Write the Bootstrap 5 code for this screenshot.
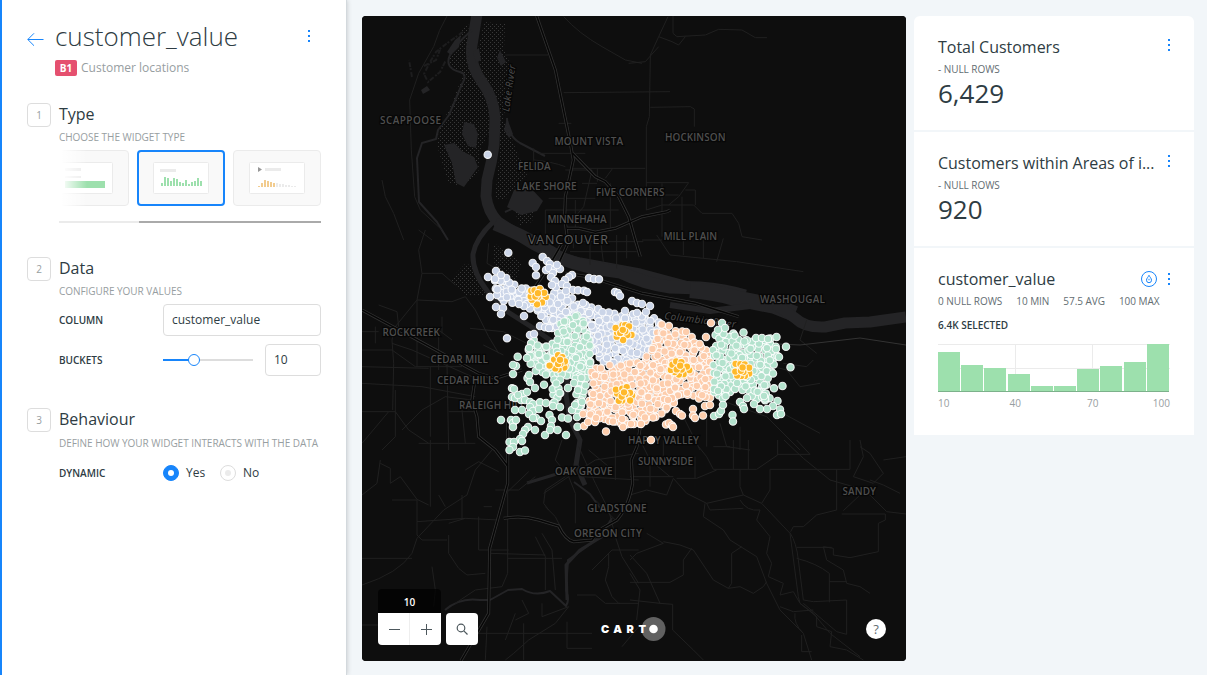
<!DOCTYPE html>
<html lang="en">
<head>
<meta charset="utf-8">
<meta name="viewport" content="width=device-width, initial-scale=1">
<title>customer_value</title>
<link href="https://cdn.jsdelivr.net/npm/bootstrap@5.3.0/dist/css/bootstrap.min.css" rel="stylesheet">
<style>
body{font-family:"Open Sans",sans-serif;font-size:12px;line-height:16px;color:#2e3c43;background:#f2f6f9;height:675px;overflow:hidden}
.editor{width:347px;flex:none;background:#fff;border-left:2px solid #1785fb;border-right:1px solid #d3d9dd;box-shadow:0 0 5px rgba(0,0,0,.2);padding:22px 25px 0 25px;z-index:1}
.back{width:28px;flex:none;padding-top:10px}
.title-lg{font-size:26px;line-height:30px;font-weight:300;margin:-1px 0 9px}
.tag-b1{background:#e5506f;color:#fff;font-size:10px;font-weight:700;width:22px;height:16px;border-radius:2px;text-align:center;line-height:16px}
.muted{color:#979ea1}
.step{width:24px;height:24px;flex:none;border:1px solid #ddd;border-radius:4px;font-size:10px;line-height:22px;text-align:center;color:#979ea1}
.head{font-size:16px;line-height:22px;font-weight:400;margin:0 0 4px}
.hint{font-size:10px;line-height:16px;color:#979ea1;white-space:nowrap;letter-spacing:-.04px}
.lab{font-size:10px;font-weight:600;width:104px;flex:none}
.field{border:1px solid #ddd;border-radius:4px;height:32px;line-height:30px;padding:0 8px;font-size:12px;background:#fff}
.body262{width:262px;flex:none}
.types{height:56px;overflow:hidden}
.types::before{content:"";position:absolute;z-index:2;left:0;top:0;width:28px;height:56px;background:linear-gradient(90deg,#fff 8%,rgba(255,255,255,0))}
.tile{width:88px;height:56px;flex:none;background:#f9f9f9;border:1px solid #ebebeb;border-radius:4px}
.tile.on{border:2px solid #1785fb}
.scroll{height:2px;background:#ebebeb}
.scroll div{width:182px;height:2px;background:#aaa}
.radio{width:16px;height:16px;border-radius:50%;border:1px solid #ddd;background:#fff;display:flex;align-items:center;justify-content:center}
.radio::after{content:"";width:6px;height:6px;border-radius:50%;background:#ebebeb}
.radio.on{background:#1785fb;border-color:#1785fb}
.radio.on::after{background:#fff}
.map-wrap{width:544px;height:645px;margin:16px 8px 0 15px;flex:none;border-radius:4px;overflow:hidden;background:#0e0e0e}
.zoomer{left:16px;bottom:16px}
.lvl{height:24px;width:63px;background:rgba(0,0,0,.7);color:#fff;font-size:10px;font-weight:600;line-height:27px;text-align:center;border-radius:4px 4px 0 0}
.zbtn{height:32px;background:#fff;border-radius:0 0 4px 4px}
.sbtn{width:32px;height:32px;background:#fff;border-radius:4px}
.help{width:20px;height:20px;right:20px;bottom:22px;border-radius:50%;background:#fff;color:#636d72;font-size:13px;line-height:20px;text-align:center}
.logo{left:238px;bottom:20px}
.widgets{width:280px;margin-top:16px;flex:none}
.widget{background:#fff;padding:20px 24px 0;margin-bottom:2px;height:114px}
.wt{font-size:16px;line-height:22px;font-weight:400;margin:0;width:218px;white-space:nowrap;letter-spacing:-.02px}
.stats{font-size:10px;line-height:14px;color:#636d72;letter-spacing:-.05px}
.num{font-size:26px;line-height:32px;margin-top:1px}
.ticks{font-size:10px;line-height:14px;color:#979ea1;width:232px}
.ticks span{width:24px;text-align:center}
.t{fill:#4f4f4f;stroke:#070707;stroke-width:2.6px;paint-order:stroke;font-family:"Open Sans",sans-serif;font-size:10px;font-weight:600}
.road path{fill:none;stroke:#202020;stroke-width:3}
.hwA path{fill:none;stroke:#323232;stroke-width:9}
.hwB path{fill:none;stroke:#060606;stroke-width:4.5}
</style>
</head>
<body class="d-flex">
<aside class="editor">
  <header class="d-flex">
    <div class="back"><svg class="d-block" width="17" height="15" viewBox="0 0 17 15" fill="none" stroke="#1785fb"><path d="M16.500 7.500H.8M7 1.300L.8 7.500 7 13.700"/></svg></div>
    <div class="flex-grow-1">
      <h1 class="title-lg">customer_value</h1>
      <div class="d-flex"><span class="tag-b1">B1</span><span class="muted ms-1">Customer locations</span></div>
    </div>
    <svg width="2" height="13" fill="#1785fb" style="margin:8px 11px 0 0"><path d="M0 0h2v2H0zM0 5h2v2H0zM0 10h2v2H0z"/></svg>
  </header>

  <section class="d-flex gap-2" style="margin-top:27px;height:154px">
    <div class="step">1</div>
    <div class="body262">
      <h2 class="head">Type</h2>
      <div class="hint">CHOOSE THE WIDGET TYPE</div>
      <div class="types d-flex justify-content-end gap-2 position-relative" style="margin-top:5px">
        <div class="tile d-flex align-items-center justify-content-center"><svg width="56" height="32"><rect x=".5" y=".5" width="55" height="31" rx="1" fill="#fff" stroke="#ebebeb"/><path fill="#ebebeb" d="M8 6h16v3H8zM8 14h16v2H8z"/><path fill="#9de0ad" d="M8 19h40v7H8z"/></svg></div>
        <div class="tile on d-flex align-items-center justify-content-center"><svg width="56" height="32"><rect x=".5" y=".5" width="55" height="31" rx="1" fill="#fff" stroke="#ebebeb"/><path fill="#ebebeb" d="M7 7h16v3H7z"/><path fill="#9de0ad" d="M8 24v-3h2v3zM11 24v-9h2v9zM14 24v-8h2v8zM17 24v-5h2v5zM20 24v-8h2v8zM23 24v-7h2v7zM26 24v-4h2v4zM29 24v-3h2v3zM32 24v-6h2v6zM35 24v-2h2v2zM38 24v-4h2v4zM41 24v-5h2v5zM44 24v-8h2v8zM47 24v-5h2v5z"/></svg></div>
        <div class="tile d-flex align-items-center justify-content-center"><svg width="56" height="32"><rect x=".5" y=".5" width="55" height="31" rx="1" fill="#fff" stroke="#ebebeb"/><path fill="#979797" d="M9 5l4 2.500L9 10z"/><path fill="#ebebeb" d="M16 6h16v3H16zM27 25v-4h2v4zM30 25v-3h2v3zM33 25v-3h2v3zM36 25v-2h2v2zM39 25v-2h2v2zM42 25v-1h2v1zM45 25v-1h2v1z"/><path fill="#f2cc8f" d="M9 25v-1h2v1zM12 25v-4h2v4zM15 25v-7h2v7zM18 25v-6h2v6zM21 25v-5h2v5zM24 25v-4h2v4z"/></svg></div>
      </div>
      <div class="scroll d-flex justify-content-end" style="margin-top:15px"><div></div></div>
    </div>
  </section>

  <section class="d-flex gap-2" style="height:151px">
    <div class="step">2</div>
    <div class="body262">
      <h2 class="head">Data</h2>
      <div class="hint">CONFIGURE YOUR VALUES</div>
      <div class="d-flex align-items-center" style="margin-top:5px"><span class="lab">COLUMN</span><div class="field flex-grow-1">customer_value</div></div>
      <div class="d-flex align-items-center mt-2"><span class="lab">BUCKETS</span>
        <svg width="90" height="14"><path d="M0 6h90v2H0z" fill="#ddd"/><path d="M0 6h28v2H0z" fill="#1785fb"/><circle cx="31" cy="7" r="5.500" fill="#fff" stroke="#1785fb"/></svg>
        <div class="field ms-auto" style="width:56px">10</div></div>
    </div>
  </section>

  <section class="d-flex gap-2">
    <div class="step">3</div>
    <div class="body262">
      <h2 class="head">Behaviour</h2>
      <div class="hint" style="margin-top:5px">DEFINE HOW YOUR WIDGET INTERACTS WITH THE DATA</div>
      <div class="d-flex align-items-center" style="margin-top:14px"><span class="lab">DYNAMIC</span><span class="radio on"></span><span style="width:34px;margin-left:7px">Yes</span><span class="radio"></span><span style="margin-left:7px">No</span></div>
    </div>
  </section>
</aside>

<main class="map-wrap position-relative">
<svg class="d-block" id="map" width="544" height="645" viewBox="362 16 544 645">
  <defs>
    <pattern id="marsh" width="4" height="4" patternUnits="userSpaceOnUse"><rect width="1" height="1" fill="#383838"/><rect x="2" y="2" width="1" height="1" fill="#383838"/></pattern>
  </defs>
  <rect x="362" y="16" width="544" height="645" fill="#0e0e0e"/>
  <!-- wetlands -->
  <g fill="url(#marsh)">
    <path d="M468 22L450 48 448 66 464 72 452 103 440 128 437 145 448 182 460 186 478 175 480 150 490 130 492 105 478 76 470 60z"/>
    <path d="M484 22L505 24 504 50 512 68 508 95 503 120 512 140 527 175 518 185 505 200 495 198 499 160 500 110 482 80 478 50z"/>
    <path d="M514 210L534 208 532 222 520 225zM450 280L466 263 477 270 480 288 489 296 465 296zM493 242L505 252 522 262 515 285 495 270z"/>
  </g>
  <!-- water -->
  <g fill="none" stroke="#242426" stroke-linejoin="round">
    <path stroke-width="11" d="M477 14L472 45Q469 64 482 82Q494 98 495 118L494 145Q492 162 487 180L486 196Q488 212 498 222L520 236Q550 256 580 263L640 274 700 290"/>
    <path stroke-width="5" d="M493 222Q476 238 473 254Q472 272 488 292L508 312 530 326 550 340 568 372 566 395 570 420 580 440 576 465 585 485"/>
    <path stroke-width="13" d="M495 224Q530 238 560 258Q585 268 620 272Q645 284 670 287L700 288Q725 290 745 296"/>
    <path stroke-width="16" d="M690 290Q715 292 735 298L775 306 795 314"/><path stroke-width="6" d="M670 305L710 311 750 306"/>
    <path stroke-width="11" d="M775 304L795 318Q805 328 825 327L845 323 870 322 906 317"/>
    <path stroke-width="2" d="M472 30Q455 45 450 55Q444 68 460 72Q468 74 462 84L449 115 438 130 436 139 422 143 417 158 419 202 437 222 448 240"/>
    <path stroke-width="2" d="M507 118Q507 135 520 143L545 156M505 212L516 207"/>
    <path stroke-width="2" d="M445 610Q460 597 480 600L490 600 508 590 522 589Q535 597 550 591L566 606Q570 600 566 590L568 560 585 548 600 537 612 518M574 482L590 494 600 508"/>
    <path stroke-width="3" d="M567 600L566 565 580 550 603 536M527 483L560 473"/>
  </g>
  <g fill="#242426"><path d="M464 122l10 2 4 10-2 14-8-2-6-12zM444 145l10-2 8 8 12 6 4 10-14 20-8-4-4-20zM514 190l14-5 15 16-6 10-16 4-14-8zM421 90l6-4 3 4-7 4zM473 52l6-4 2 12-5 3zM500 50l6 12-5 4-4-8zM455 40l6-5-2 12-8 8-4-3z"/><path d="M507 118l6 16-4 4-5-8z"/></g>
  <path fill="none" stroke="#1d1d1e" stroke-width="2" stroke-dasharray="5 2 2 1" d="M463 32L446 44 436 52 430 62 424 74 428 82 440 72 446 60M412 77L409 60M424 66L436 60 440 50"/>
  <!-- minor roads, drawn on a grid three times finer than the map -->
  <g class="road">
    <g transform="translate(362 10) scale(.33333)">
      <path d="M255 18Q230 60 215 110L170 190 143 270 148 420 158 560 175 600 240 660M430 135H558M605 248L924 245M590 340H628M632 475H850M660 520H705M515 415V480M530 430H640L670 430M515 450Q570 455 610 470M610 480H690M706 475V515M752 475L730 505M690 480L665 590 640 620M745 520V660M560 565H700M550 600H770M640 570V660M550 600V690M60 510L70 560 95 610 125 690M170 660L210 690M605 20Q650 70 720 110L790 150 840 160"/>
      <path d="M918 20L890 80 865 135 862 320 853 350V600M933 18V70L945 80 1030 75 1070 58 1140 60 1180 83H1215M865 292L985 290 997 297V350M853 518H980L950 560 920 585M853 600L900 585 995 585 1020 610H1110L1130 640 1140 680 1200 690M960 560V660M900 520V680M840 690H900M853 555H950M970 540H1000V585"/>
      <path d="M890 80L930 95 950 105 970 80M800 160L850 155 890 110"/>
    </g>
    <g transform="translate(362 230) scale(.33333)">
      <path d="M190 0L170 60 180 130 165 210 100 290 90 330M165 210L270 215 310 200 340 240 380 320 410 370M50 225L105 245 110 290M40 290V340M0 305H50M0 360H90L160 410H300M90 340L150 360 240 400 330 440M0 410L200 415M0 460L180 470 340 500M0 545L100 545 140 600 200 640M90 330L95 400 92 540M165 210V410M255 400L260 660M205 410V620M0 640L80 545M120 600L180 540 250 500 330 510M260 545H340M300 540L310 640M180 130L240 130 280 165M240 260V310M230 420V300L270 330M380 40L375 100 410 120M100 480V620L60 660M170 640H340"/>
    </g>
    <g transform="translate(362 440) scale(.33333)">
      <path d="M0 435Q110 400 150 340L165 295 245 210 315 165 340 90 390 30M0 355H150M55 60L45 130 0 165M55 70L85 85V130L115 110 165 178 200 195M90 180H165V285L180 300H255M165 245L310 235 410 240M205 0V200M310 90L350 65 410 95M300 165V235M260 285V340L290 385 315 405 370 400M260 250L310 235M350 230V330H440M437 150V400L420 440 340 450 280 490M385 340L550 345M437 355H600M520 290L550 350V450M540 280L570 330 580 450M550 200L580 230 600 270M400 150L470 150 520 110M437 155L500 95M600 0L580 60 620 110 640 160 640 250M650 20L700 130 740 210 760 290 780 350 830 430M545 160L620 110 700 60M560 210L545 190 550 150 610 110M690 390L750 330 830 330M740 340V380L730 420 750 470 770 490H830M645 465H700L730 490H775M540 530L620 500 580 550 500 600 455 640 430 660M540 490V530M615 545V625H690M350 580H690M485 550V660M0 555H50M375 560L370 660M210 380L220 450 215 500M780 620L830 560M390 200L365 200M230 165L250 200M700 60L830 40M660 110L830 120M680 30L740 80M760 0V120M700 180L760 240"/>
      <path d="M460 520L430 600M480 480L500 520 460 540"/>
    </g>
    <g transform="translate(630 440) scale(.33333)">
      <path d="M462 0L520 55 600 120 670 140 720 165 770 215 828 222M443 0V45L380 88H250L230 50 190 0M443 43H540L500 0M420 88H660V0M620 88V210L560 225 520 260 490 260 482 275M640 212L690 165M635 222H766V240L745 250V335L660 353 610 345V325L580 320 590 360 640 390 650 430 690 440 720 460M480 278Q500 310 505 360L520 480 550 485 650 480V583L620 575 520 490M605 322H500M500 355Q560 370 598 400V487M598 425H650M420 88V150L395 190M330 88V140L340 165M0 165L50 150 110 165 130 115 170 160 230 190 340 165 395 190 480 280 505 470 510 490 550 520 600 580 690 650M225 190L220 230 280 270 300 300 380 350 410 430 450 510 520 580 545 660M230 190L240 210 340 205M140 115H200L260 90M310 0V88M355 0V88M195 50V115M250 20H300M0 360L20 340 100 310 50 280M100 305L150 315 190 330 250 420 295 445 330 440 370 460 400 440 410 425M335 320L305 340V430L295 445M185 325L160 360V405L120 427H0M0 345L50 400 90 490 128 493V570L190 630 220 660M0 480L90 490M0 400L30 450 20 540M690 0L700 50 670 110 730 130 760 100 720 40 690 20M720 120L760 135 810 160M760 60L828 50M450 500L490 515 550 510M515 585V635H545M495 520Q490 550 520 580M100 0V60M30 0L60 60 120 110M0 110H130M60 60V140"/>
      <path stroke-width="4.500" d="M330 180Q350 215 390 210L380 240 420 290 410 340 425 370 415 410 460 430 450 465 490 455 510 490 560 530 560 560 605 575 600 620 650 630 700 660"/>
    </g>
    <g transform="translate(640 300) scale(.33333)">
      <path d="M240 300L380 350 480 450M360 340L330 300M410 330L540 400M430 190L500 200 520 180M200 350V440M240 370L260 440 330 450M130 350L180 450M300 380V450M500 60L480 120 530 160M400 200L440 210 480 260 540 250"/>
    </g>
    <g transform="translate(470 235) scale(.33333)"><path d="M310 0V40M360 10V90M390 0L400 80M440 0V100M470 0V70M300 50H500M340 20H520M560 0L600 60 800 80 1000 110M640 0V60M700 0V70M760 10L740 80M0 280L100 290 180 330M40 330L100 360"/></g>
  </g>
  <!-- highways: pale casing with a dark core -->
  <g id="hw" class="hwA">
    <g transform="translate(362 10) scale(.33333)"><path d="M524 18L580 180 625 400 634 450 610 560 608 620 618 700 590 760M632 430L700 500 730 515 770 560 800 620 820 690 835 740M615 655L650 655 700 667 760 655 840 620 915 605 925 600"/></g>
    <g transform="translate(362 230) scale(.33333)"><path d="M0 240L130 310 350 430 400 445 480 420M340 440L330 510 345 560 350 620 400 660 437 708"/><path d="M610 130L680 140 840 190 1000 220 1130 260M600 40L560 110 500 200"/></g>
    <g transform="translate(362 440) scale(.33333)"><path d="M437 -60L437 130 383 325 380 520 297 662M425 235Q480 225 530 240L590 258Q610 300 635 305L690 300 720 265 765 240Q800 200 812 130L808 60 825 20 835 -40"/></g>
  </g>
  <g id="hwCore" class="hwB"></g>
  <path d="M720 330Q760 345 800 345L860 338 906 345" fill="none" stroke="#333"/>
  <g id="labels"></g>
  <text class="t" font-style="italic" transform="translate(509 112) rotate(-82)" textLength="47" style="font-weight:400">Lake River</text>
  <text class="t" font-style="italic" transform="translate(664 319) rotate(7)" textLength="72" style="font-weight:400">Columbia River</text>
  <g id="dots" stroke="#fff" stroke-width="1.100" stroke-opacity=".88"></g>
</svg>
  <div class="position-absolute zoomer d-flex align-items-end">
    <div><div class="lvl">10</div>
      <div class="zbtn"><svg class="d-block" width="63" height="32" stroke="#4d585d" stroke-width="1"><path d="M11 16.500h11M43 16.500h11M48.500 11v11"/><path d="M31.500 0v32" stroke="#eee"/></svg></div></div>
    <div class="sbtn" style="margin-left:5px"><svg class="d-block" width="32" height="32" fill="none" stroke="#4d585d" stroke-width="1.200"><circle cx="15" cy="15" r="3.800"/><path d="M17.800 17.800l3.700 3.700"/></svg></div>
  </div>
  <svg class="position-absolute logo" width="70" height="24"><circle cx="53.500" cy="12" r="12" fill="#616161"/><circle cx="53.500" cy="12" r="4.300" fill="#fff"/><text x="1" y="16" fill="#fff" font-family="Inter,sans-serif" font-weight="900" font-size="11" textLength="45">CART</text></svg>
  <div class="position-absolute help">?</div>
</main>

<aside class="widgets">
  <div class="widget rounded-top">
    <div class="d-flex justify-content-between"><h3 class="wt">Total Customers</h3><svg width="2" height="13" fill="#1785fb" style="margin-top:3px"><path d="M0 0h2v2H0zM0 5h2v2H0zM0 10h2v2H0z"/></svg></div>
    <div class="stats" style="margin-top:4px">- NULL ROWS</div>
    <div class="num">6,429</div>
  </div>
  <div class="widget">
    <div class="d-flex justify-content-between"><h3 class="wt">Customers within Areas of i...</h3><svg width="2" height="13" fill="#1785fb" style="margin-top:3px"><path d="M0 0h2v2H0zM0 5h2v2H0zM0 10h2v2H0z"/></svg></div>
    <div class="stats" style="margin-top:4px">- NULL ROWS</div>
    <div class="num">920</div>
  </div>
  <div class="widget" style="height:187px">
    <div class="d-flex align-items-center"><h3 class="wt" style="width:203px">customer_value</h3>
      <svg width="16" height="16" fill="none" stroke="#1785fb"><circle cx="8" cy="8" r="7.500"/><path d="M8 4.300C7.300 6 5.500 7.300 5.500 9.200a2.500 2.500 0 0 0 5 0C10.500 7.300 8.700 6 8 4.300zM8 7.800v1.500"/></svg>
      <svg class="ms-auto" width="2" height="12" fill="#1785fb"><path d="M0 0h2v2H0zM0 5h2v2H0zM0 10h2v2H0z"/></svg></div>
    <div class="stats d-flex" style="margin-top:4px;gap:14px"><span>0 NULL ROWS</span><span>10 MIN</span><span>57.5 AVG</span><span>100 MAX</span></div>
    <div class="fw-semibold" style="font-size:10px;margin-top:9px">6.4K SELECTED</div>
    <svg class="d-block" id="hist" width="232" height="48" style="margin-top:11px"><path d="M0 .5h232M0 24.500h232M77.500 0v48M154.500 0v48" stroke="#ebebeb"/></svg>
    <div class="ticks d-flex justify-content-between" style="margin-top:4px"><span class="text-start">10</span><span style="margin-left:-12px">40</span><span style="margin-right:-12px">70</span><span class="text-end">100</span></div>
  </div>
</aside>
<script src="https://cdn.jsdelivr.net/npm/bootstrap@5.3.0/dist/js/bootstrap.bundle.min.js"></script>
<script>
document.getElementById('hwCore').innerHTML = document.getElementById('hw').innerHTML;
// place names: text, left, right, vertical centre
const places = [['SCAPPOOSE',380,441,120],['MOUNT VISTA',554.5,623,141],['HOCKINSON',665,725.500,137],['FELIDA',518,550.500,166.500],['LAKE SHORE',516.500,576.500,186],['FIVE CORNERS',596,664.500,192.500],['MINNEHAHA',547.500,606.500,219],['MILL PLAIN',663.500,717,236],['WASHOUGAL',760,825,299],['ROCKCREEK',382.500,440,332.500],['CEDAR MILL',430.500,488,359],['CEDAR HILLS',437,499,380],['RALEIGH HILLS',459,531,405],['HAPPY VALLEY',628,699,440],['SUNNYSIDE',638,693,461],['OAK GROVE',555,612.500,471],['GLADSTONE',587,646.500,508.500],['OREGON CITY',574,642,533],['SANDY',842.500,876,491.500]];
document.getElementById('labels').innerHTML =
  places.map(([s,a,b,y]) => `<text class="t" x="${a}" y="${y+3.500}" textLength="${b-a}">${s}</text>`).join('') +
  '<text class="t" x="528" y="243.700" textLength="80" style="font-size:12.500px;font-weight:400;fill:#606060">VANCOUVER</text>';

let seed = 7;
const rnd = () => (seed = (seed * 16807) % 2147483647) / 2147483647;
const inside = (p, x, y) => { let c = false; for (let i = 0, j = p.length - 2; i < p.length; j = i, i += 2) if ((p[i+1] > y) !== (p[j+1] > y) && x < (p[j]-p[i]) * (y-p[i+1]) / (p[j+1]-p[i+1]) + p[i]) c = !c; return c; };
const out = [];
const dot = (x, y, f) => out.push(`<circle cx="${x.toFixed(1)}" cy="${y.toFixed(1)}" r="3.700" fill="${f}"/>`);
// fills a polygon with scattered dots: a tight lower layer, then a looser one whose dots stay whole
function area(poly, f, gap) {
  const xs = poly.filter((_, i) => i % 2 === 0), ys = poly.filter((_, i) => i % 2);
  const x0 = Math.min(...xs), x1 = Math.max(...xs), y0 = Math.min(...ys), y1 = Math.max(...ys);
  for (const [g0, n] of [[gap, 3000], [gap * 1.9, 1200]]) {
    const got = [];
    for (let k = 0; k < n; k++) {
      const x = x0 + rnd() * (x1 - x0), y = y0 + rnd() * (y1 - y0);
      if (inside(poly, x, y) && got.every(g => Math.hypot(g[0]-x, g[1]-y) > g0)) { got.push([x, y]); dot(x, y, f); }
    }
  }
}
const list = (a, f) => { for (let i = 0; i < a.length; i += 2) dot(a[i], a[i+1], f); };
const L = '#cbd5e8', G = '#b3e2cd', O = '#fdcdac', Y = '#ffb92a';
area([494,280,505,277,519,286,531,289,545,298,556,292,570,296,580,305,590,305,606,312,622,314,640,314,655,318,660,322,656,336,646,355,630,362,602,364,592,350,586,325,578,312,566,325,550,330,541,316,525,306,512,303,496,299], L, 4.100);
area([578,311,586,326,591,348,590,372,580,378,558,374,548,378,532,372,528,352,531,338,544,346,556,340,560,324], G, 4.200);
area([552,376,560,378,562,398,552,404], G, 4.500);
area([575,376,588,378,583,396,580,414,574,412,576,395], G, 4.500);
area([660,323,672,326,692,334,702,345,710,355,711,385,712,398,700,399,680,394,673,405,660,415,640,424,624,425,606,421,588,418,583,412,590,395,590,372,600,366,632,363,647,355,656,336], O, 4.200);
area([716,332,733,333,745,339,770,338,776,345,778,357,773,370,767,385,770,398,763,404,748,394,735,391,722,399,714,392,713,350], G, 4.600);
list([487.700,154.700,508.300,252.700,532.700,263,536,267,536,275.300,542.700,257,547,261,550,264,546,270,549,268,555,269,560,269,557,265,553,273,551,277,555,281,556,287,552,285,572,275,569,277,565,280,562,284,567,286,566,291,589,278,594,279,599,279.300,573,290,578,290.300,584,290.700,587,292,615,292,618,293,620,296,496,271,501,275,488,277,495,279,490,297,496,307,503,308,501,314,524,316,507,338.300,540,326,545,327.300,549,328,632,301,637,303,642,304,637,313,650,306,646,312,583,303,625,311,536,292,530,335,534,334,524,306,519,304,558,304,544,303], L);
list([517.700,356.700,527,358,516,366,513,365,513,374,527.500,378,530,382,529,375,535,388,544,384.700,512,388.300,514,389,522,394,527,392,512,397,515,398,521,400,525,400,530,402,533,404,540,402.300,546,403,553,406,560,407,515,410,522,410,530,407,533,411,539,409,529,414,536,418,541,421,549.500,415,552,420,551,426,562,417.500,568,418.500,577,417,577.500,426.700,545,435,550,430,557.500,430,566,435,501,420,511,420,513,423,513,427,516,420,533,418,528,427,535,430,525,430,523,434,520,439,522,441,509.500,442,514,442,513,447,509.500,450,520,452,525,450.500,572,410,575,405,582,402,574,383,568,388,518,395], G);
list([583,414,584,426,588,422,595,422,606,431.500,596,418,651,440,711,323,706,337,676,411,680,414,682,415.500,693,409,693,415.500,695,418,703,415.500,705,406,710,405,641,424,645,417.500,653,417.500,666,424.500,669,423,672,425.500,673,427,631,424,623,427,672,398,668,400], O);
list([722,323,725,328,718,330,743.500,332.500,776.500,337,786,346.700,790.500,367.300,779,357,773,373.500,782.500,386,774,388.300,756,338,762,338,768,339,777.500,401,773,406,767,409,780,409.500,777,415,781,414,714,416,719,414,721,411,723,405,732.500,415,733,421.500,740,402,743,406,744,409,754,404,760,409,714,389,718,391,747,398,764,396], G);
for (const [cx, cy] of [[537,296],[623,331],[559,363],[624,394],[680,369],[742,370]]) {
  for (let i = 0; i < 9; i++) { const a = i * 0.698 + rnd() * .5, r = 6 + rnd() * 4; dot(cx + Math.cos(a) * r, cy + Math.sin(a) * r * .9, Y); }
  for (let i = 0; i < 3; i++) { const a = i * 2.090 + rnd(), r = 1 + rnd() * 2.500; dot(cx + Math.cos(a) * r, cy + Math.sin(a) * r, Y); }
}
document.getElementById('dots').innerHTML = out.join('');

const tops = [8,21,24,30,42,42,25,22,18,0];
document.getElementById('hist').innerHTML += tops.map((t, i) => { const x = Math.round(i * 23.200); return `<path fill="#9de0ad" d="M${x} ${t}h22V47h-22z"/>`; }).join('') + '<path fill="#7cb18b" d="M0 47h231v1H0z"/>';
</script>
</body>
</html>
